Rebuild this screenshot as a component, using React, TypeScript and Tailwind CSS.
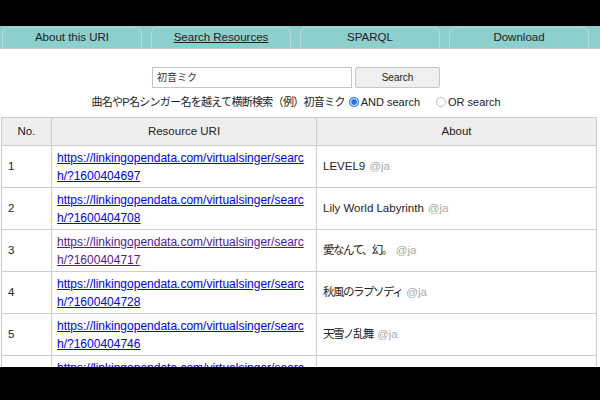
const tabs = ["About this URI", "Search Resources", "SPARQL", "Download"];

interface Row {
  no: number;
  id: string;
  label: string;
  jp: boolean;
  visited?: boolean;
}

const rows: Row[] = [
  { no: 1, id: "1600404697", label: "LEVEL9", jp: false },
  { no: 2, id: "1600404708", label: "Lily World Labyrinth", jp: false },
  { no: 3, id: "1600404717", label: "愛なんて、幻。", jp: true, visited: true },
  { no: 4, id: "1600404728", label: "秋風のラプソディ", jp: true },
  { no: 5, id: "1600404746", label: "天雪ノ乱舞", jp: true },
  { no: 6, id: "1600404755", label: "メルト", jp: true },
];

const font = "font-['Liberation_Sans','Noto_Sans_CJK_JP',sans-serif]";

export default function App() {
  return (
    <div className={`w-[600px] h-[400px] bg-black flex flex-col ${font} text-[#222]`}>
      <div className="h-[26px] shrink-0" />
      <div className="h-[341px] bg-white overflow-hidden">
        {/* Nav tabs */}
        <nav className="h-[23px] bg-[#8dcfcd] border-b border-[#c9c9c9] pt-[1px] px-[2px] flex gap-[9px]">
          {tabs.map((t) => (
            <div
              key={t}
              className="w-[140px] h-[21px] rounded-t-[6px] border border-b-0 border-[#b7dad9] flex items-center justify-center text-[11.5px]"
            >
              <span className={t === "Search Resources" ? "underline" : ""}>{t}</span>
            </div>
          ))}
        </nav>

        {/* Search form */}
        <div className="mt-[18px] flex justify-center gap-[3px] pr-[8px]">
          <div className="w-[200px] h-[21px] border border-[#c6c6c6] flex items-center pl-[4px] text-[10px] text-[#333]">
            初音ミク
          </div>
          <button className="w-[85px] h-[21px] bg-[#efefef] border border-[#c6c6c6] rounded-[2px] text-[10px] text-[#222]">
            Search
          </button>
        </div>

        <div className="mt-[6px] h-[16px] flex items-center justify-center pr-[8px] text-[11px] text-[#222]">
          <span className="tracking-[-0.7px]">曲名やP名シンガー名を越えて横断検索（例）初音ミク</span>
          <span className="ml-[4px] mr-[2px] w-[10px] h-[10px] rounded-full bg-[#1a73e8] flex items-center justify-center">
            <span className="w-[8px] h-[8px] rounded-full border-[1.5px] border-white bg-[#1a73e8]" />
          </span>
          <span>AND search</span>
          <span className="ml-[16px] mr-[2px] w-[10px] h-[10px] rounded-full border border-[#bdbdbd] bg-white" />
          <span>OR search</span>
        </div>

        {/* Results table */}
        <table className="mt-[7px] ml-[1px] w-[596px] table-fixed border-collapse text-[11.5px]">
          <colgroup>
            <col className="w-[50px]" />
            <col className="w-[265px]" />
            <col />
          </colgroup>
          <thead>
            <tr className="h-[28px] bg-[#eeeeee]">
              <th className="border border-[#cccccc] font-normal">No.</th>
              <th className="border border-[#cccccc] font-normal">Resource URI</th>
              <th className="border border-[#cccccc] font-normal">About</th>
            </tr>
          </thead>
          <tbody>
            {rows.map((r) => (
              <tr key={r.no} className="h-[42px]">
                <td className="border border-[#cccccc] px-[6px]">{r.no}</td>
                <td className="border border-[#cccccc] px-[5px] text-[12px] leading-[18px]">
                  <a
                    href="#"
                    className={`underline ${r.visited ? "text-[#551a8b]" : "text-[#0000ee]"}`}
                  >
                    <span className="block">https://linkingopendata.com/virtualsinger/searc</span>
                    <span>h/?{r.id}</span>
                  </a>
                </td>
                <td className="border border-[#cccccc] px-[6px]">
                  <span className={r.jp ? "tracking-[-1.5px]" : ""}>{r.label}</span>
                  <span className="ml-[4px] text-[#aaaaaa]">@ja</span>
                </td>
              </tr>
            ))}
          </tbody>
        </table>
      </div>
    </div>
  );
}
